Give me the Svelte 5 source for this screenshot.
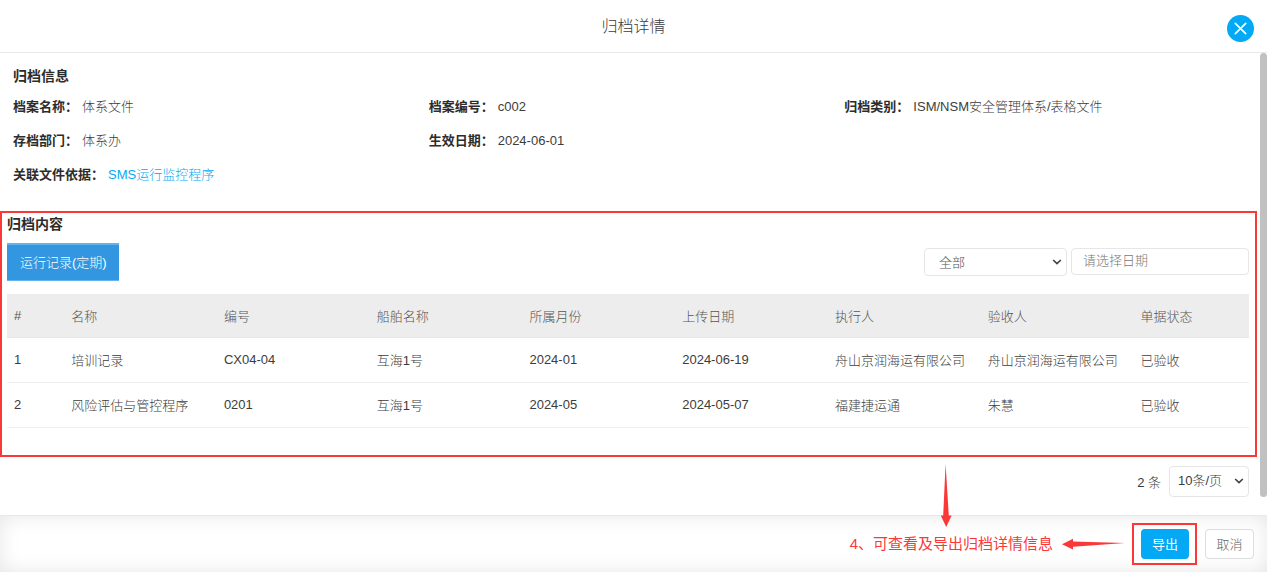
<script>
  const info = [
    { label: '档案名称：', value: '体系文件' },
    { label: '档案编号：', value: 'c002' },
    { label: '归档类别：', value: 'ISM/NSM安全管理体系/表格文件' },
    { label: '存档部门：', value: '体系办' },
    { label: '生效日期：', value: '2024-06-01' },
  ];
  const columns = ['#', '名称', '编号', '船舶名称', '所属月份', '上传日期', '执行人', '验收人', '单据状态'];
  const rows = [
    ['1', '培训记录', 'CX04-04', '互海1号', '2024-01', '2024-06-19', '舟山京润海运有限公司', '舟山京润海运有限公司', '已验收'],
    ['2', '风险评估与管控程序', '0201', '互海1号', '2024-05', '2024-05-07', '福建捷运通', '朱慧', '已验收'],
  ];
</script>

<div class="dialog">
  <header>
    <h1>归档详情</h1>
    <button class="close" aria-label="关闭">
      <svg viewBox="0 0 27 27" width="27" height="27" aria-hidden="true">
        <path d="M8.3 8.3 18.7 18.7M18.7 8.3 8.3 18.7" fill="none" stroke="#fff" stroke-width="1.7" stroke-linecap="round" />
      </svg>
    </button>
  </header>

  <div class="body">
    <main>
      <section class="info">
        <h2>归档信息</h2>
        <dl>
          {#each info as item}
            <div><dt>{item.label}</dt><dd>{item.value}</dd></div>
          {/each}
          <div class="full"><dt>关联文件依据：</dt><dd><a href="#file">SMS运行监控程序</a></dd></div>
        </dl>
      </section>

      <section class="content">
        <h2>归档内容</h2>
        <div class="toolbar">
          <button class="tab">运行记录(定期)</button>
          <div class="filters">
            <select class="filter" aria-label="状态"><option>全部</option></select>
            <input type="text" placeholder="请选择日期" aria-label="日期" />
          </div>
        </div>
        <table>
          <thead>
            <tr>{#each columns as c}<th scope="col">{c}</th>{/each}</tr>
          </thead>
          <tbody>
            {#each rows as row}
              <tr>{#each row as cell}<td>{cell}</td>{/each}</tr>
            {/each}
          </tbody>
        </table>
      </section>

      <div class="pager">
        <span>2 条</span>
        <select class="size" aria-label="每页条数"><option>10条/页</option></select>
      </div>
    </main>
    <div class="track"><div class="thumb"></div></div>
  </div>

  <footer>
    <svg class="down" viewBox="0 0 12 63" width="12" height="63" aria-hidden="true">
      <path d="M5.6 0 8.8 51.5 11.6 51.5 6.2 63 0.8 51.5 3.2 51.5Z" fill="#fb3838" />
    </svg>
    <p>4、可查看及导出归档详情信息</p>
    <svg class="left" viewBox="0 0 64 12" width="64" height="12" aria-hidden="true">
      <path d="M0 6.2 11 0.8 11 3.6 63 5 11 8.8 11 11.6Z" fill="#fb3838" />
    </svg>
    <div class="mark"><button class="primary">导出</button></div>
    <button class="cancel">取消</button>
  </footer>
</div>

<style>
  :global(body) {
    margin: 0;
    background: #fff;
  }
  .dialog {
    display: flex;
    flex-direction: column;
    min-height: 100vh;
    font-family: 'Liberation Sans', 'Noto Sans CJK SC', sans-serif;
    font-size: 13px;
    font-weight: 300;
    color: #3c3c3c;
  }
  .dialog,
  .dialog * {
    box-sizing: border-box;
  }
  button,
  select,
  input {
    font: inherit;
    margin: 0;
  }
  button {
    padding: 0 0 2px;
    border: 0;
    cursor: pointer;
  }
  header {
    position: relative;
    display: flex;
    align-items: center;
    justify-content: center;
    height: 53px;
    padding-bottom: 2px;
    border-bottom: 1px solid #e8e8e8;
  }
  h1 {
    margin: 0;
    font-size: 16px;
    font-weight: 300;
  }
  .close {
    position: absolute;
    right: 13px;
    top: 15px;
    width: 27px;
    height: 27px;
    padding: 0;
    border-radius: 50%;
    background: #03a9f4;
  }
  .close svg {
    display: block;
  }
  .body {
    flex: 1;
    display: flex;
  }
  main {
    flex: 1;
    min-width: 0;
    padding-bottom: 18px;
  }
  .track {
    width: 7px;
  }
  .thumb {
    height: 96%;
    border-radius: 4px;
    background: #c1c1c1;
  }
  h2 {
    margin: 0;
    font-size: 14px;
    font-weight: 700;
    line-height: 22px;
    color: #2c2c2c;
  }
  .info {
    padding: 12px 0 19px 13px;
  }
  dl {
    display: grid;
    grid-template-columns: repeat(3, 1fr);
    margin: 3px 0 0;
    line-height: 34px;
  }
  dl div {
    display: flex;
    gap: 4px;
  }
  .full {
    grid-column: 1 / -1;
  }
  dt {
    font-weight: 700;
    color: #2c2c2c;
  }
  dd {
    margin: 0;
  }
  a {
    color: #03a9f4;
    text-decoration: none;
  }
  .content {
    margin-right: 3px;
    padding: 0 6px 27px 5px;
    border: 2px solid #fb3838;
  }
  .toolbar {
    display: flex;
    align-items: center;
    justify-content: space-between;
    margin: 8px 0 13px;
  }
  .tab {
    height: 38px;
    padding: 0 12px 3px 13px;
    border-top: 2px solid #63b3ee;
    border-bottom: 1px solid #63b3ee;
    background: #3296e1;
    color: #fff;
  }
  .filters {
    display: flex;
    align-items: flex-start;
    gap: 4px;
  }
  select,
  input {
    border: 1px solid #e6e6e6;
    border-radius: 4px;
    background-color: #fff;
    color: #3c3c3c;
  }
  select {
    appearance: none;
    background-image: url("data:image/svg+xml,%3Csvg xmlns='http://www.w3.org/2000/svg' width='10' height='6'%3E%3Cpath d='M1.2 1 5 4.6 8.8 1' fill='none' stroke='%23444' stroke-width='1.7'/%3E%3C/svg%3E");
    background-repeat: no-repeat;
    background-position: right 4px center;
  }
  .filter {
    width: 143px;
    height: 28px;
    padding: 0 20px 0 14px;
    color: #555;
  }
  input {
    width: 178px;
    height: 27px;
    padding: 0 11px 2px;
  }
  input::placeholder {
    color: #777;
    opacity: 1;
  }
  table {
    width: 100%;
    border-collapse: collapse;
    table-layout: fixed;
  }
  th,
  td {
    height: 45px;
    padding: 0 0 0 7px;
    border-bottom: 1px solid #eee;
    text-align: left;
    font-weight: 300;
    white-space: nowrap;
  }
  th {
    width: 12.3%;
    height: 43px;
    background: #ededed;
    border-color: #e6e6e6;
    color: #555;
  }
  th:first-child {
    width: 4.6%;
  }
  th:last-child {
    width: auto;
  }
  .pager {
    display: flex;
    align-items: center;
    justify-content: flex-end;
    gap: 8px;
    margin-top: 9px;
    padding-right: 11px;
  }
  .size {
    width: 80px;
    height: 31px;
    padding: 0 16px 2px 8px;
  }
  footer {
    position: relative;
    display: flex;
    align-items: center;
    justify-content: flex-end;
    height: 57px;
    padding-right: 13px;
    border-top: 1px solid #e9e9e9;
    box-shadow: inset 0 0 20px rgba(0, 0, 0, 0.1);
  }
  .down {
    position: absolute;
    right: 315px;
    bottom: 45px;
  }
  p {
    margin: 0 9px 0 0;
    padding-bottom: 3px;
    font-size: 15px;
    font-weight: 400;
    color: #fb3838;
  }
  .left {
    margin-right: 6px;
  }
  .mark {
    margin-right: 8px;
    padding: 4px 6px 4px 7px;
    border: 2px solid #fb3838;
  }
  .primary,
  .cancel {
    display: block;
    height: 30px;
    border-radius: 4px;
  }
  .primary {
    width: 48px;
    background: #03a9f4;
    color: #fff;
    font-weight: 400;
  }
  .cancel {
    width: 49px;
    border: 1px solid #ddd;
    background: #fff;
    color: #666;
  }
</style>
